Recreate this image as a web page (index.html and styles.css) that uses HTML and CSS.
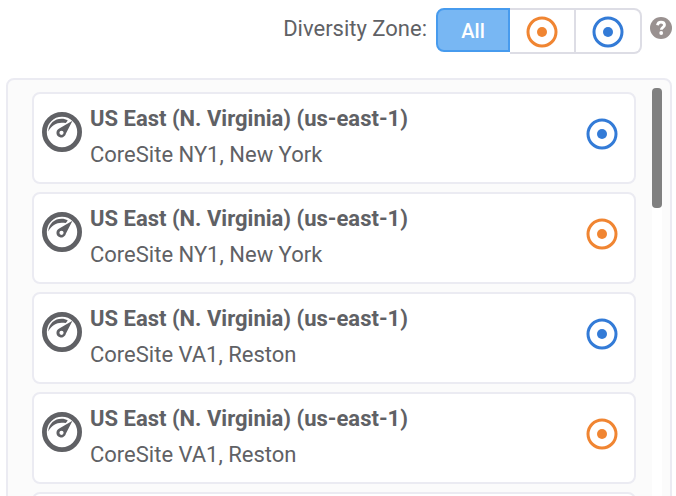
FILE: index.html
```html
<!DOCTYPE html>
<html lang="en">
<head>
    <meta charset="UTF-8">
    <meta name="viewport" content="width=device-width, initial-scale=1.0">
    <title>Diversity Zone</title>
    <link rel="stylesheet" href="styles.css">
</head>
<body>
    <svg class="sprite" aria-hidden="true">
        <symbol id="icon-zone" viewBox="0 0 32 32">
            <circle cx="16" cy="16" r="14" fill="none" stroke="currentColor" stroke-width="3"/>
            <circle cx="16" cy="16" r="5" fill="currentColor"/>
        </symbol>
        <symbol id="icon-speed" viewBox="0 0 40 40">
            <circle cx="20" cy="20" r="17.6" fill="none" stroke="currentColor" stroke-width="4.8"/>
            <path d="M6.2 19.500C7 11.500 12.500 6.800 19.500 6.800c2.600 0 4.600.6 6.300 1.800l-2 2.500C16.500 9.500 10 12 6.200 19.500z" fill="currentColor"/>
            <path d="M30.500 8.800L23.800 21.700A4.700 4.700 0 1 1 17.200 16.600z" fill="currentColor"/>
            <circle cx="19.500" cy="20.800" r="2.100" fill="#fff"/>
        </symbol>
    </svg>

    <header class="toolbar">
        <span class="toolbar-label" id="zone-label">Diversity Zone:</span>
        <div class="zone-filter" role="group" aria-labelledby="zone-label">
            <button type="button" class="zone-btn active" aria-pressed="true">All</button>
            <button type="button" class="zone-btn" aria-label="Orange zone">
                <svg class="zone-icon orange"><use href="#icon-zone"/></svg>
            </button>
            <button type="button" class="zone-btn" aria-label="Blue zone">
                <svg class="zone-icon blue"><use href="#icon-zone"/></svg>
            </button>
        </div>
        <button type="button" class="help-btn" aria-label="Help">
            <svg class="help-icon" viewBox="0 0 22 22">
                <circle cx="11" cy="11" r="11" fill="#999190"/>
                <path d="M7.500 8.200C7.800 5.900 9.300 5.100 11 5.100c2.100 0 3.500 1.200 3.500 2.900 0 2.400-3.200 2.300-3.200 4.700" fill="none" stroke="#fff" stroke-width="2.800"/>
                <circle cx="11.200" cy="16" r="1.900" fill="#fff"/>
            </svg>
        </button>
    </header>

    <main class="panel">
        <ul class="location-list">
            <li class="location">
                <svg class="speed-icon"><use href="#icon-speed"/></svg>
                <div class="location-text">
                    <h2>US East (N. Virginia) (us-east-1)</h2>
                    <p>CoreSite NY1, New York</p>
                </div>
                <svg class="zone-icon blue"><use href="#icon-zone"/></svg>
            </li>
            <li class="location">
                <svg class="speed-icon"><use href="#icon-speed"/></svg>
                <div class="location-text">
                    <h2>US East (N. Virginia) (us-east-1)</h2>
                    <p>CoreSite NY1, New York</p>
                </div>
                <svg class="zone-icon orange"><use href="#icon-zone"/></svg>
            </li>
            <li class="location">
                <svg class="speed-icon"><use href="#icon-speed"/></svg>
                <div class="location-text">
                    <h2>US East (N. Virginia) (us-east-1)</h2>
                    <p>CoreSite VA1, Reston</p>
                </div>
                <svg class="zone-icon blue"><use href="#icon-zone"/></svg>
            </li>
            <li class="location">
                <svg class="speed-icon"><use href="#icon-speed"/></svg>
                <div class="location-text">
                    <h2>US East (N. Virginia) (us-east-1)</h2>
                    <p>CoreSite VA1, Reston</p>
                </div>
                <svg class="zone-icon orange"><use href="#icon-zone"/></svg>
            </li>
            <li class="location"></li>
        </ul>
        <div class="scroll-track">
            <div class="scroll-thumb"></div>
        </div>
    </main>
</body>
</html>
```

FILE: styles.css
```css
* {
    margin: 0;
    padding: 0;
    box-sizing: border-box;
}

body {
    font-family: Roboto, "Liberation Sans", sans-serif;
    font-size: 22px;
    line-height: 36px;
    color: #606165;
    background: #fff;
    height: 100vh;
    overflow: hidden;
}

button {
    font: inherit;
    cursor: pointer;
}

.sprite {
    position: absolute;
    width: 0;
    height: 0;
}

.toolbar {
    display: flex;
    justify-content: flex-end;
    align-items: flex-start;
    padding: 8px 4px 24px;
}

.toolbar-label {
    margin: 3px 9px 0 0;
}

.zone-filter {
    display: flex;
    align-items: flex-start;
}

.zone-btn {
    display: flex;
    align-items: center;
    justify-content: center;
    width: 66px;
    height: 46px;
    padding-top: 2px;
    border: 2px solid #dddde5;
    border-left: none;
    background: #fff;
}

.zone-btn:last-child {
    border-radius: 0 8px 8px 0;
}

.zone-btn.active {
    width: 74px;
    height: 44px;
    border: 2px solid #479bee;
    border-radius: 8px 0 0 8px;
    background: #78b7f3;
    color: #fff;
    font-size: 20px;
    font-weight: 500;
}

.zone-icon {
    flex: none;
    width: 32px;
    height: 32px;
}

.orange {
    color: #f08532;
}

.blue {
    color: #337bd7;
}

.help-btn {
    margin: 9px 0 0 8px;
    border: none;
    background: none;
}

.help-icon {
    display: block;
    width: 22px;
    height: 22px;
}

.panel {
    display: flex;
    gap: 16px;
    margin: 0 4px 0 6px;
    padding: 8px 8px 8px 24px;
    border: 2px solid #ebebf2;
    border-radius: 8px;
    background: #fbfbfb;
}

.location-list {
    flex: 1;
    display: grid;
    gap: 8px;
    padding-top: 4px;
    list-style: none;
}

.location {
    display: flex;
    align-items: flex-start;
    min-height: 92px;
    padding: 7px 16px 9px 8px;
    border: 2px solid #ebebf2;
    border-radius: 8px;
    background: #fff;
}

.location .zone-icon {
    align-self: center;
    margin-bottom: 6px;
}

.speed-icon {
    width: 40px;
    height: 40px;
    margin: 11px 8px 0 0;
}

.location-text {
    flex: 1;
}

.location h2 {
    font-size: 22px;
    font-weight: 700;
}

.scroll-track {
    width: 10px;
    border-radius: 4px;
    background: #fff;
}

.scroll-thumb {
    height: 120px;
    border-radius: 4px;
    background: #808080;
}
```
